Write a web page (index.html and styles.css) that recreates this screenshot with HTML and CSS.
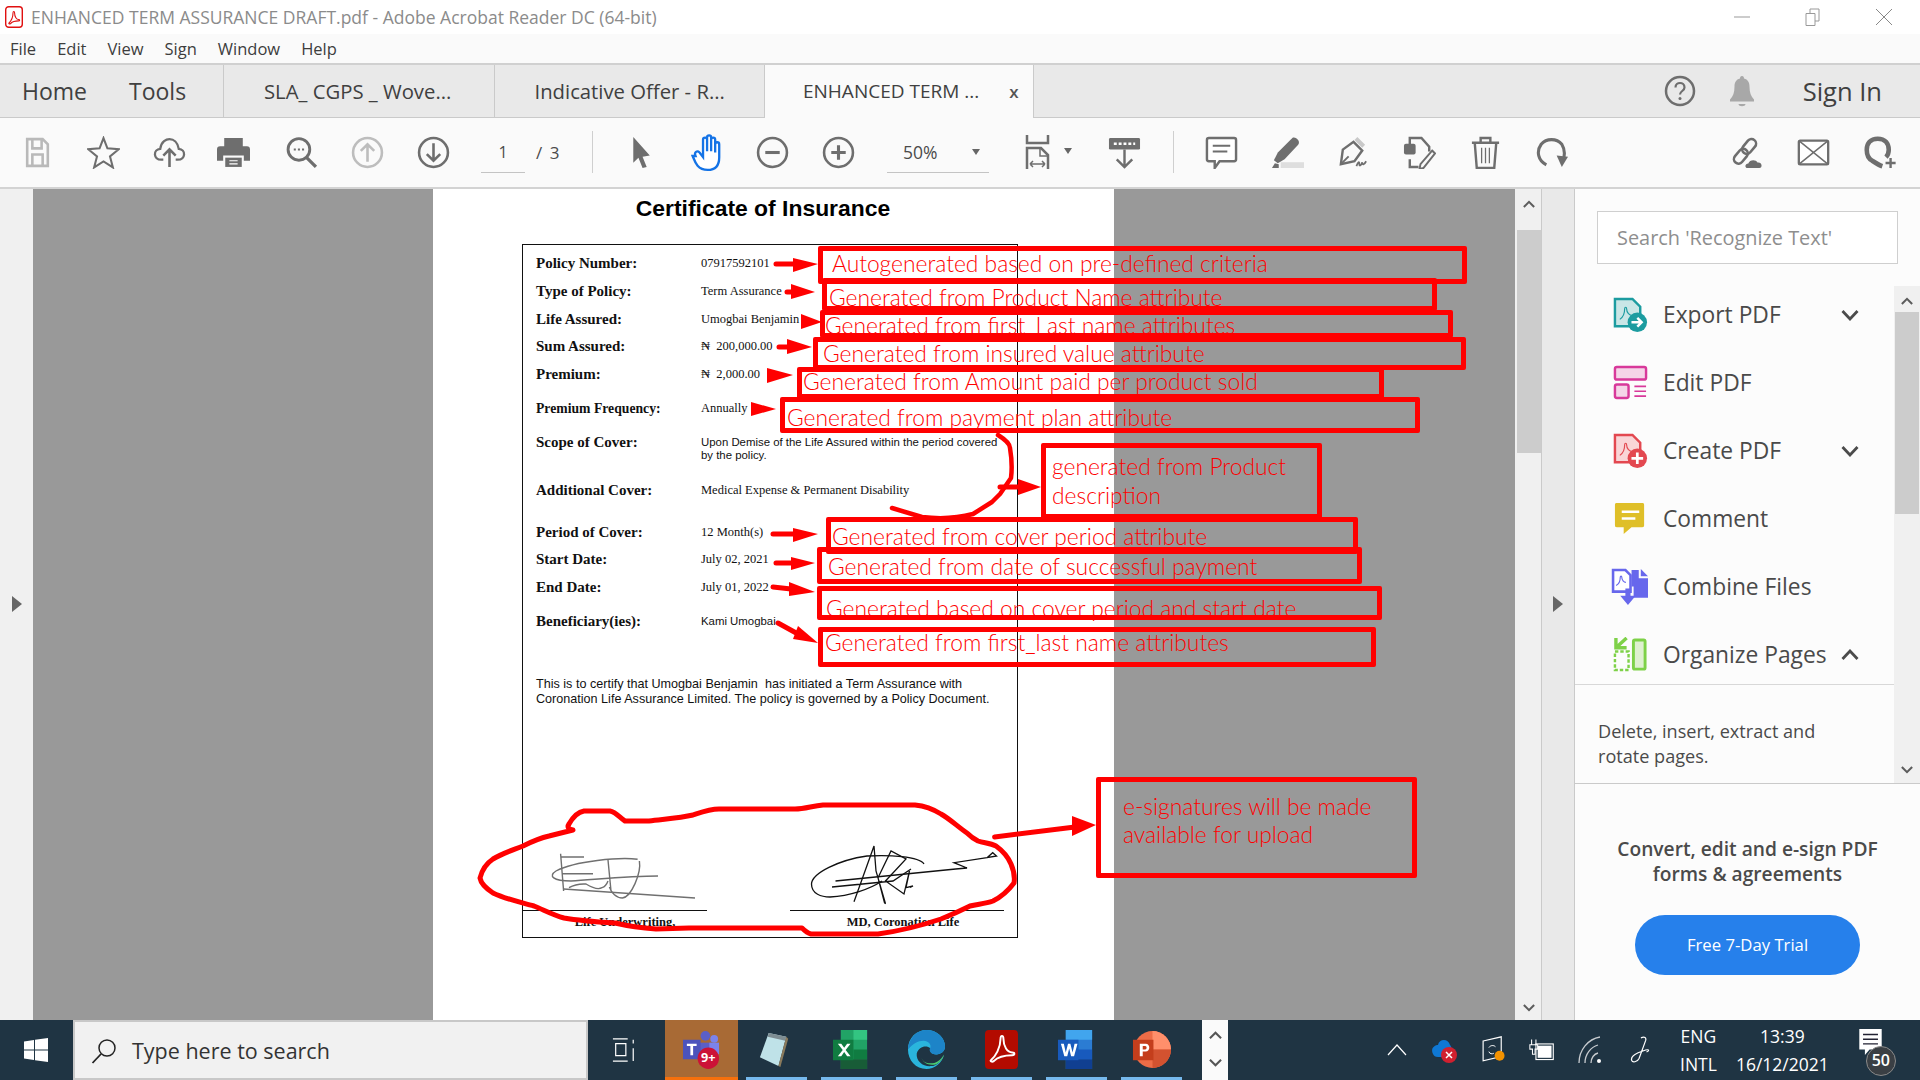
FILE: index.html
```html
<!DOCTYPE html>
<html lang="en">
<head>
  <meta charset="UTF-8">
  <title>ENHANCED TERM ASSURANCE DRAFT.pdf - Adobe Acrobat Reader DC (64-bit)</title>
  <link rel="stylesheet" href="styles.css">
</head>
<body>

  <header class="titlebar">
    <svg class="app-icon" viewBox="0 0 18 22"><rect x="0.7" y="0.7" width="16.6" height="20.6" rx="3" fill="#fff" stroke="#e01010" stroke-width="1.4"/><path d="M4 17c2-2 4-6 4-10 0-2 1.600-2 1.600 0 0 4 2 6.500 4 6.500 1.400 0 1.400 1.400 0 1.400-2.500 0-6 .6-8 2.600-1.200 1-2.200-.2-1.600-.5z" fill="none" stroke="#e01010" stroke-width="1.100"/></svg>
    <span class="title-text">ENHANCED TERM ASSURANCE DRAFT.pdf - Adobe Acrobat Reader DC (64-bit)</span>
    <div class="window-btns">
      <svg viewBox="0 0 20 20"><path d="M2 10h16" stroke="#999" stroke-width="1"/></svg>
      <svg viewBox="0 0 20 20"><path d="M3 6.500h9v12H3zM7 6.500V2h9v12h-4" fill="none" stroke="#999" stroke-width="1"/></svg>
      <svg viewBox="0 0 20 20"><path d="M2 2l16 16M18 2L2 18" stroke="#888" stroke-width="1"/></svg>
    </div>
  </header>

  <nav class="menubar">
    <span>File</span><span>Edit</span><span>View</span><span>Sign</span><span>Window</span><span>Help</span>
  </nav>

  <div class="tabbar">
    <div class="tab-main"><span>Home</span><span>Tools</span></div>
    <div class="tab">SLA_ CGPS _ Wove...</div>
    <div class="tab">Indicative Offer - R...</div>
    <div class="tab active">ENHANCED TERM ... <span class="tab-close">x</span></div>
    <div class="tab-rest">
      <svg class="help-icon" viewBox="0 0 32 32"><circle cx="16" cy="16" r="14" fill="none" stroke="#6e6e6e" stroke-width="2.500"/><path d="M11.500 12.500c0-6 9-6 9 0 0 3.500-4.500 3.500-4.500 7" fill="none" stroke="#6e6e6e" stroke-width="2.200"/><circle cx="16" cy="23.500" r="1.500" fill="#6e6e6e"/></svg>
      <svg class="bell-icon" viewBox="0 0 26 32"><path d="M13 1c1.500 0 2 1 2 2.500 4 1 5.500 4 5.500 8 0 6 1.500 10 4.500 13v2H1v-2c3-3 4.500-7 4.500-13 0-4 1.500-7 5.500-8C11 2 11.500 1 13 1zM9.500 29h7c0 3-7 3-7 0z" fill="#a8a8a8"/></svg>
      <span class="sign-in">Sign In</span>
    </div>
  </div>

  <div class="toolbar">
    <div class="tool"><svg viewBox="0 0 32 32"><path d="M6 3h15l5 5v21H6zM11 3v9h9V3M11 29V18h10v11" fill="none" stroke="#b9b9b9" stroke-width="2.500"/></svg></div>
    <div class="tool"><svg viewBox="0 0 32 32"><path d="M16 2l3.800 10 11 .8-8.500 7 2.800 10.700L16 24.700l-9.100 5.800 2.800-10.700-8.500-7 11-.8z" fill="none" stroke="#6e6e6e" stroke-width="2"/></svg></div>
    <div class="tool"><svg viewBox="0 0 32 32"><path d="M10 23H8c-8 0-8-10-1-10.500C8 5 13 3 16 3c4 0 8 3 9 9.500 7 .5 7 10.500-1 10.500h-2" fill="none" stroke="#6e6e6e" stroke-width="2.200"/><path d="M16 30V13M10 19l6-6 6 6" fill="none" stroke="#6e6e6e" stroke-width="2.500"/></svg></div>
    <div class="tool print-cell"><svg viewBox="0 0 32 32"><path d="M7 2h18v8H7zM3 10h26c2 0 3 1 3 3v11h-6v-5H6v5H0V13c0-2 1-3 3-3z" fill="#6e6e6e"/><path d="M8 21h16v9H8z" fill="#6e6e6e"/><path d="M12 24h8M12 27h8" stroke="#fff" stroke-width="1.200"/></svg></div>
    <div class="tool"><svg viewBox="0 0 32 32"><circle cx="13.500" cy="13" r="10.500" fill="none" stroke="#6e6e6e" stroke-width="2.800"/><path d="M21 21l9 9" stroke="#6e6e6e" stroke-width="3.200"/><path d="M8.500 13h2M12.500 13h2M16.500 13h2" stroke="#6e6e6e" stroke-width="2"/></svg></div>
    <div class="tool"><svg viewBox="0 0 32 32"><circle cx="16" cy="16" r="14" fill="none" stroke="#bdbdbd" stroke-width="2.500"/><path d="M16 25V8M9.500 14.500L16 8l6.500 6.500" fill="none" stroke="#bdbdbd" stroke-width="2.500"/></svg></div>
    <div class="tool"><svg viewBox="0 0 32 32"><circle cx="16" cy="16" r="14" fill="none" stroke="#6e6e6e" stroke-width="2.500"/><path d="M16 7v17M9.500 17.500L16 24l6.500-6.500" fill="none" stroke="#6e6e6e" stroke-width="2.500"/></svg></div>
    <div class="page-nav"><span class="page-num">1</span><span class="page-total">/ 3</span></div>
    <div class="tool-sep"></div>
    <div class="tool cursor-cell"><svg viewBox="0 0 32 32"><path d="M9 1l16 18-7 1 4 10-4 1-4-10-5 5z" fill="#6e6e6e"/></svg></div>
    <div class="tool hand-cell"><svg viewBox="0 0 32 32"><path d="M4 19c2 5 4 12 13 12 8 0 10-5 10-11V9c0-2.500-3.500-2.500-3.500 0v7-11c0-2.500-3.500-2.500-3.500 0v10V3c0-2.500-3.500-2.500-3.500 0v12V5c0-2.500-3.500-2.500-3.500 0v15l-3-4c-2-2-5-.5-3.500 3z" fill="#fff" stroke="#1473e6" stroke-width="2"/></svg></div>
    <div class="tool"><svg viewBox="0 0 32 32"><circle cx="16" cy="16" r="14" fill="none" stroke="#6e6e6e" stroke-width="2.500"/><path d="M9 16h14" stroke="#6e6e6e" stroke-width="3"/></svg></div>
    <div class="tool"><svg viewBox="0 0 32 32"><circle cx="16" cy="16" r="14" fill="none" stroke="#6e6e6e" stroke-width="2.500"/><path d="M9 16h14M16 9v14" stroke="#6e6e6e" stroke-width="3"/></svg></div>
    <div class="zoom-box"><span>50%</span><i class="caret"></i></div>
    <div class="tool fit-cell"><svg viewBox="0 0 32 36"><path d="M4 1v8h21V1" fill="none" stroke="#6e6e6e" stroke-width="2.500"/><path d="M4 35V14h14l7 7v14" fill="none" stroke="#6e6e6e" stroke-width="2.500"/><path d="M17 14v8h8" fill="none" stroke="#6e6e6e" stroke-width="1.500"/><path d="M7 30h15M7 30l3-3M7 30l3 3M22 30l-3-3M22 30l-3 3" fill="none" stroke="#6e6e6e" stroke-width="1.500"/></svg><i class="caret"></i></div>
    <div class="tool read-cell"><svg viewBox="0 0 34 34"><rect x="1" y="2" width="32" height="12" rx="1.500" fill="#6e6e6e"/><path d="M6 8h3M11 8h3M16 8h3M21 8h3M26 8h2" stroke="#fff" stroke-width="2.500"/><path d="M17 14v18M9 24l8 8 8-8" fill="none" stroke="#6e6e6e" stroke-width="2.500"/></svg></div>
    <div class="tool-sep sep-two"></div>
    <div class="tool"><svg viewBox="0 0 32 34"><path d="M3 2h26c1 0 2 1 2 2v20c0 1-1 2-2 2H14l-5 7v-7H3c-1 0-2-1-2-2V4c0-1 1-2 2-2z" fill="#fff" stroke="#6e6e6e" stroke-width="2.500"/><path d="M7 10h18M7 16h15" stroke="#6e6e6e" stroke-width="2"/></svg></div>
    <div class="tool"><svg viewBox="0 0 34 34"><path d="M3 25l4-8L22 2c3-2 9 3 6 7L14 24l-7 4z" fill="#6e6e6e"/><path d="M1 33l3-5 4 1v4z" fill="#6e6e6e"/><path d="M10 27h24v6H10z" fill="#dedede"/></svg></div>
    <div class="tool"><svg viewBox="0 0 34 34"><path d="M4 29L6 14 17 6l9 9-8 11z" fill="none" stroke="#6e6e6e" stroke-width="2.500"/><path d="M18 4l3-3 8 8-3 3z" fill="#c9c9c9"/><path d="M4 29l8-8" stroke="#6e6e6e" stroke-width="2"/><path d="M20 31c2-5 3-5 3-2s2 1 3-2c0 3 2 3 4-1" fill="none" stroke="#6e6e6e" stroke-width="1.800"/></svg></div>
    <div class="tool"><svg viewBox="0 0 34 34"><path d="M7 9V2h12l8 9v5" fill="none" stroke="#6e6e6e" stroke-width="2.500"/><rect x="1" y="8" width="12" height="11" rx="2" fill="#6e6e6e"/><path d="M7 24v8h9" fill="none" stroke="#6e6e6e" stroke-width="2.500"/><path d="M30 15l3 3-12 15-4 1 1-5z" fill="none" stroke="#6e6e6e" stroke-width="2"/></svg></div>
    <div class="tool"><svg viewBox="0 0 32 34"><path d="M2 7h28M11 7V2h10v5" fill="none" stroke="#6e6e6e" stroke-width="2.500"/><path d="M5 8l2 25h18l2-25" fill="none" stroke="#6e6e6e" stroke-width="2.500"/><path d="M12 12v16M16 12v16M20 12v16" stroke="#6e6e6e" stroke-width="1.300"/></svg></div>
    <div class="tool"><svg viewBox="0 0 32 32"><path d="M11 28C3 24 1 15 6 8c5-6 15-6 20 0 3 5 3 11 1 16" fill="none" stroke="#6e6e6e" stroke-width="3"/><path d="M21 19l11 1-6 10z" fill="#6e6e6e"/></svg></div>
    <div class="tool-right">
      <div class="tool"><svg viewBox="0 0 36 36"><g transform="rotate(-50 17 16)" fill="none" stroke="#6e6e6e" stroke-width="2.800"><rect x="0" y="11" width="18" height="10" rx="5"/><rect x="14" y="11" width="18" height="10" rx="5"/></g><path d="M19 35c-3 0-3-5 1-5 1-4 8-5 10-1 5-1 6 6 2 6z" fill="#6e6e6e"/></svg></div>
      <div class="tool"><svg viewBox="0 0 36 32"><rect x="2" y="3" width="32" height="26" rx="1.500" fill="#fff" stroke="#6e6e6e" stroke-width="2.500"/><path d="M2 3l32 26M34 3L2 29" stroke="#6e6e6e" stroke-width="1.600"/></svg></div>
      <div class="tool"><svg viewBox="0 0 36 36"><path d="M15 3c8 0 12 5 12 12 0 3-1 6-3 8M15 3C7 3 3 8 3 15c0 6 2 10 6 12 3 2 8 5 11 6" fill="none" stroke="#6e6e6e" stroke-width="5"/><path d="M29 24v11M23.500 29.500h11" stroke="#6e6e6e" stroke-width="2.600"/></svg></div>
    </div>
  </div>

  <main class="workspace">
    <div class="side-left"><svg class="side-arrow" viewBox="0 0 10 16"><path d="M0 0l10 8-10 8z" fill="#666"/></svg></div>

    <section class="viewer">
      <article class="page">
        <h1 class="page-title">Certificate of Insurance</h1>
        <div class="certificate">
          <dl class="fields">
            <dt>Policy Number:</dt><dd>07917592101</dd>
            <dt>Type of Policy:</dt><dd>Term Assurance</dd>
            <dt>Life Assured:</dt><dd>Umogbai Benjamin</dd>
            <dt>Sum Assured:</dt><dd>₦&nbsp; 200,000.00</dd>
            <dt>Premium:</dt><dd>₦&nbsp; 2,000.00</dd>
            <dt class="small-label">Premium Frequency:</dt><dd>Annually</dd>
            <dt class="scope-label">Scope of Cover:</dt><dd class="sans-value">Upon Demise of the Life Assured within the period covered<br>by the policy.</dd>
            <dt>Additional Cover:</dt><dd>Medical Expense &amp; Permanent Disability</dd>
            <dt>Period of Cover:</dt><dd>12 Month(s)</dd>
            <dt>Start Date:</dt><dd>July 02, 2021</dd>
            <dt>End Date:</dt><dd>July 01, 2022</dd>
            <dt>Beneficiary(ies):</dt><dd class="sans-value">Kami Umogbai</dd>
          </dl>
          <p class="statement">This is to certify that Umogbai Benjamin &nbsp;has initiated a Term Assurance with<br>Coronation Life Assurance Limited. The policy is governed by a Policy Document.</p>
          <div class="signers">
            <div class="signer signer-left">Life Underwriting,</div>
            <div class="signer signer-right">MD, Coronation Life</div>
          </div>
        </div>
      </article>
    </section>

    <div class="v-scroll">
      <svg class="chev" viewBox="0 0 14 10"><path d="M1 8.500l6-6 6 6" fill="none" stroke="#5c5c5c" stroke-width="2.400"/></svg>
      <div class="v-thumb"></div>
      <svg class="chev chev-bottom" viewBox="0 0 14 10"><path d="M1 1.500l6 6 6-6" fill="none" stroke="#5c5c5c" stroke-width="2.400"/></svg>
    </div>
    <div class="side-right"><svg class="side-arrow" viewBox="0 0 10 16"><path d="M0 0l10 8-10 8z" fill="#666"/></svg></div>

    <aside class="panel">
      <div class="panel-search"><div class="search-input">Search 'Recognize Text'</div></div>
      <div class="panel-scroll-wrap">
        <div class="panel-body">
          <ul class="tools-list">
            <li>
              <svg viewBox="0 0 36 36"><path d="M2 2h18l8 8v20H2z" fill="#c9e6e6" stroke="#1c9ca0" stroke-width="2.500"/><path d="M7 23c3-2 5-6 5-11 0-2 2-2 2 0 0 4 3 7 6 7" fill="none" stroke="#1c9ca0" stroke-width="1.200"/><circle cx="25" cy="26" r="10" fill="#1c9ca0"/><path d="M19 26h10M25 21.500l4.500 4.500-4.500 4.500" fill="none" stroke="#fff" stroke-width="2.500"/></svg>
              <span>Export PDF</span>
              <svg class="row-chev" viewBox="0 0 18 12"><path d="M1.500 2l7.500 8 7.500-8" fill="none" stroke="#4b4b4b" stroke-width="2.800"/></svg>
            </li>
            <li>
              <svg viewBox="0 0 36 36"><rect x="2" y="2" width="32" height="13" rx="2" fill="#f5d5e8" stroke="#d8399a" stroke-width="2.500"/><rect x="2" y="20" width="14" height="14" rx="2" fill="#f5d5e8" stroke="#d8399a" stroke-width="2.500"/><path d="M22 22h12M22 27h12M22 32h12" stroke="#d8399a" stroke-width="1.600"/></svg>
              <span>Edit PDF</span>
            </li>
            <li>
              <svg viewBox="0 0 36 36"><path d="M2 2h18l8 8v20H2z" fill="#f9d5d7" stroke="#e34850" stroke-width="2.500"/><path d="M7 23c3-2 5-6 5-11 0-2 2-2 2 0 0 4 3 7 6 7" fill="none" stroke="#e34850" stroke-width="1.200"/><circle cx="25" cy="26" r="10" fill="#e34850"/><path d="M19 26h12M25 20v12" stroke="#fff" stroke-width="2.800"/></svg>
              <span>Create PDF</span>
              <svg class="row-chev" viewBox="0 0 18 12"><path d="M1.500 2l7.500 8 7.500-8" fill="none" stroke="#4b4b4b" stroke-width="2.800"/></svg>
            </li>
            <li>
              <svg viewBox="0 0 36 36"><path d="M4 2h26c1.500 0 2 .5 2 2v21c0 1.500-.5 2-2 2H19l-8 7v-7H4c-1.500 0-2-.5-2-2V4c0-1.500.5-2 2-2z" fill="#dfbf28"/><path d="M9 11h18M9 18h14" stroke="#fff" stroke-width="2.500"/></svg>
              <span>Comment</span>
            </li>
            <li>
              <svg class="combine-icon" viewBox="0 0 36 36"><path d="M2 2h12l5 5v16H2z" fill="#fff" stroke="#6767ec" stroke-width="2.500"/><path d="M5 17c2-1 4-4 4-8 0-1.500 1.500-1.500 1.500 0 0 3 2 5 4 5" fill="none" stroke="#6767ec" stroke-width="1.100"/><path d="M20 2h7v8h9v19H22V18h-2z" fill="#6767ec"/><path d="M29 1l7 7h-7z" fill="#6767ec"/><path d="M14 20h5v7h5l-7.500 9L9 27h5z" fill="#6767ec"/></svg>
              <span>Combine Files</span>
            </li>
            <li>
              <svg viewBox="0 0 36 36"><rect x="21" y="3" width="12" height="30" rx="1.500" fill="#dff0d0" stroke="#7ed148" stroke-width="3"/><path d="M2 15h14v19H2z" fill="none" stroke="#7ed148" stroke-width="2.500" stroke-dasharray="3.500 2"/><path d="M3 1v10h11M3 11L14 1" fill="none" stroke="#7ed148" stroke-width="3.500"/></svg>
              <span>Organize Pages</span>
              <svg class="row-chev" viewBox="0 0 18 12"><path d="M1.500 10L9 2l7.500 8" fill="none" stroke="#4b4b4b" stroke-width="2.800"/></svg>
            </li>
          </ul>
          <p class="tool-desc">Delete, insert, extract and<br>rotate pages.</p>
        </div>
        <div class="panel-scrollbar">
          <svg class="chev" viewBox="0 0 14 10"><path d="M1 8.500l6-6 6 6" fill="none" stroke="#5c5c5c" stroke-width="2.400"/></svg>
          <div class="panel-thumb"></div>
          <svg class="chev chev-bottom" viewBox="0 0 14 10"><path d="M1 1.500l6 6 6-6" fill="none" stroke="#5c5c5c" stroke-width="2.400"/></svg>
        </div>
      </div>
      <div class="promo">
        <p class="promo-text">Convert, edit and e-sign PDF<br>forms &amp; agreements</p>
        <button class="trial-btn">Free 7-Day Trial</button>
      </div>
    </aside>

    <!-- signatures and the hand-drawn red marks -->
    <svg class="markup" viewBox="0 188 1515 832" width="1515" height="832">
      <g fill="none" stroke="#707070" stroke-width="1.400">
        <path d="M560.600 852.700L563.600 890M560.600 856H584M561.700 872.700H593"/>
        <path d="M637.600 858.300C620 856 575 860 556 870c-8 5-3 10 15 10 30-2 60-5 87-5"/>
        <path d="M608 859l3 31M639.400 860c2 12-8 36-17 37-6 0-11-5-13-11"/>
        <path d="M563.600 888L695 897M569 886.700c5-3 12-4 17-3.700 5 3 12 6 16 3.700 3-1 5-4 6-6.700"/>
      </g>
      <g fill="none" stroke="#111" stroke-width="1.300">
        <path d="M924 863c-5-8-35-9-57-8-28 4-55 17-55.500 28 0 10 10 13 18.500 13 20-1 40-8 52-16"/>
        <path d="M835.500 880L955.700 868 967 867 954 861.700l33-5 9.500-1.700-3.800-3.300-5.700 5"/>
        <path d="M832 886l61-6 18-12M854 900.700L874 845l2 25 9.500 32.700-1-1-6.500-25 13-26.700 15 8-20.500 22 18.500 13 5.500-23-3.500 16.700 7-1.700-3 1.500"/>
      </g>
      <path class="ink" d="M573 829C568 828 567 826 569 823 573 816 578 811 584 810H610C616 811 620 817 625 820H649C665 818 680 817 693 814 702 811 710 808 719 808H795C805 808 812 805 823 804H915C925 805 933 808 941 813 950 818 958 826 967 832 971 836 974 838 978 840 984 842 990 842 996 845 1003 850 1008 856 1011 863 1014 870 1015 876 1014 882 1008 890 1001 896 993 900 985 903 977 903 970 905 960 910 951 914 941 918 920 925 900 930 878 933H811C807 932 804 929 802 927H689L656 928C642 927 628 925 615 922 598 921 581 920 564 917 553 914 544 909 534 905 520 901 505 898 493 892 487 888 481 883 480 877 482 869 487 862 493 858 503 852 513 849 523 845 531 841 540 837 549 835z"/>
      <path class="ink thin" d="M998 434c8 5 12 10 12 13 2 12 2 22 1 30l-11 16-8 8-19 12c-15 4-35 5-51 3l-30-9"/>
      <path class="ink" d="M776 263H795M787 291h6M779 346h10M773 533h22M776 562h17M773 586l18 2M778 622l20 11M994.600 836L1075 826M1000 486h20"/>
      <g class="arrow-heads">
        <polygon points="793,257 818,263 793,271"/>
        <polygon points="791,283 815,291 791,298"/>
        <polygon points="801,313 822,321 801,328"/>
        <polygon points="787,338 812,346 787,353"/>
        <polygon points="767,367 793,374 767,382"/>
        <polygon points="751,401 776,408 751,415"/>
        <polygon points="793,527 818,533 793,541"/>
        <polygon points="791,556 815,562 791,569"/>
        <polygon points="789,581 815,591 789,595"/>
        <polygon points="798,625 818,642 793,638"/>
        <polygon points="1018,478 1041,486 1018,494"/>
        <polygon points="1072,815 1096,824 1072,835"/>
      </g>
    </svg>

    <div class="note note-1">Autogenerated based on pre-defined criteria</div>
    <div class="note note-2">Generated from Product Name attribute</div>
    <div class="note note-3">Generated from first_Last name attributes</div>
    <div class="note note-4">Generated from insured value attribute</div>
    <div class="note note-5">Generated from Amount paid per product sold</div>
    <div class="note note-6">Generated from payment plan attribute</div>
    <div class="note note-7">generated from Product<br>description</div>
    <div class="note note-8">Generated from cover period attribute</div>
    <div class="note note-9">Generated from date of successful payment</div>
    <div class="note note-10">Generated based on cover period and start date</div>
    <div class="note note-11">Generated from first_last name attributes</div>
    <div class="note note-12">e-signatures will be made<br>available for upload</div>
  </main>

  <footer class="taskbar">
    <div class="start"><svg viewBox="0 0 24 24"><path d="M0 3.500L10 2v9.500H0zM11 1.800L24 0v11.500H11zM0 12.500h10V22L0 20.500zM11 12.500h13V24l-13-1.800z" fill="#fff"/></svg></div>
    <div class="task-search">
      <svg viewBox="0 0 26 26"><circle cx="16" cy="10" r="8" fill="none" stroke="#222" stroke-width="1.500"/><path d="M10 16L1.500 25" stroke="#222" stroke-width="1.800"/></svg>
      <span>Type here to search</span>
    </div>
    <div class="task-view"><svg viewBox="0 0 26 26"><path d="M1 1h16M1 25h16M4 6h11v13H4zM23 2v4M23 11v14M1 3v0" fill="none" stroke="#fff" stroke-width="1.300"/></svg></div>
    <div class="task-app teams-app">
      <svg viewBox="0 0 40 40"><circle cx="24" cy="6" r="5" fill="#5b5fc7"/><circle cx="33" cy="9" r="4" fill="#7b83eb"/><path d="M16 13h15v17H16z" fill="#5b5fc7"/><path d="M28 13h10v12H28z" fill="#7b83eb"/><rect x="1" y="10" width="18" height="20" fill="#4b53bc"/><path d="M5 14h10v2.500h-3.600V26H8.600v-9.500H5z" fill="#fff"/><circle cx="27" cy="29" r="11" fill="#cc1237"/><text x="27" y="33" class="badge-text">9+</text></svg>
    </div>
    <div class="task-app running">
      <svg viewBox="0 0 40 40"><path d="M12 3l18 4-8 30L3 28z" fill="#bfe2e8"/><path d="M12 3l18 4-1 4-18-4z" fill="#7d8c92"/><path d="M30 7l2 2-8 29-2-1z" fill="#8a7a5c"/></svg>
    </div>
    <div class="task-app running">
      <svg viewBox="0 0 40 40"><path d="M9 0h27v40H9z" fill="#21a366"/><path d="M22 0h14v10H22z" fill="#33c481"/><path d="M22 20h14v10H22z" fill="#107c41"/><path d="M9 30h27v10H9z" fill="#185c37"/><rect x="1" y="10" width="21" height="21" fill="#107c41"/><path d="M6 14l5 6.500L6 27h3.500l3-4.500 3 4.500H19l-5-6.500L19 14h-3.500l-3 4.300-3-4.300z" fill="#fff"/></svg>
    </div>
    <div class="task-app running">
      <svg viewBox="0 0 40 40"><path d="M38 25c-2 9-10 15-18 15C9 40 1 31 1 20 1 8 10 0 20 0c11 0 19 8 19 17 0 5-4 8-9 8-4 0-7-2-6-6-4-4-12-2-14 5-1 8 7 14 15 13 5 0 10-5 13-12z" fill="#2ab5dd"/><path d="M20 0c11 0 19 8 19 17 0 5-4 8-9 8-6 0-8-4-6-7 1-3-2-7-7-7-6 0-11 3-16 9C2 8 10 0 20 0z" fill="#1d84c8"/><path d="M38 25c-4 7-10 10-16 9-3 0-6-2-7-5 2 5 8 8 15 6 4-2 7-6 8-10z" fill="#4ccf72"/></svg>
    </div>
    <div class="task-app running">
      <svg class="wide-icon" viewBox="0 0 34 40"><rect width="34" height="40" rx="4" fill="#b30b00"/><path d="M6 31c5-4 10-13 10-22 0-4 3-4 3 0 0 8 4 14 9 14 3 0 3 3 0 3-6 0-14 1-19 6-2 1.500-4-.3-3-1z" fill="none" stroke="#fff" stroke-width="2"/></svg>
    </div>
    <div class="task-app running">
      <svg viewBox="0 0 40 40"><path d="M9 0h27v40H9z" fill="#2b7cd3"/><path d="M9 0h27v10H9z" fill="#41a5ee"/><path d="M9 20h27v10H9z" fill="#185abd"/><path d="M9 30h27v10H9z" fill="#103f91"/><rect x="1" y="10" width="21" height="21" fill="#185abd"/><path d="M4 14h3l2 9 2.300-9h2.400l2.300 9 2-9h3l-3.500 13h-3l-2-8-2 8h-3z" fill="#fff"/></svg>
    </div>
    <div class="task-app running">
      <svg viewBox="0 0 40 40"><circle cx="21" cy="20" r="19" fill="#ed6c47"/><path d="M21 1a19 19 0 0 1 19 19H21z" fill="#ff8f6b"/><path d="M21 20h19a19 19 0 0 1-19 19z" fill="#d35230"/><rect x="1" y="10" width="21" height="21" fill="#c43e1c"/><path d="M8 14h6c5 0 5 8 0 8h-3v5H8zM11 16.500V20h2.500c2 0 2-3.500 0-3.500z" fill="#fff"/></svg>
    </div>
    <div class="task-scroll">
      <svg viewBox="0 0 14 10"><path d="M1 8.500l6-6 6 6" fill="none" stroke="#555" stroke-width="2.200"/></svg>
      <svg viewBox="0 0 14 10"><path d="M1 1.500l6 6 6-6" fill="none" stroke="#555" stroke-width="2.200"/></svg>
    </div>
    <div class="tray">
      <svg class="tray-caret" viewBox="0 0 20 12"><path d="M1 11l9-10 9 10" fill="none" stroke="#fff" stroke-width="1.200"/></svg>
      <svg class="tray-icon" viewBox="0 0 26 28"><path d="M2 18c-3-6 2-9 5-9 1-6 10-7 12 0 3 3 2 10-2 12H7c-3 0-4-1-5-3z" fill="#0f78d4"/><circle cx="18" cy="19" r="8" fill="#d0202f"/><path d="M15 16l6 6M21 16l-6 6" stroke="#fff" stroke-width="1.500"/></svg>
      <svg class="tray-icon" viewBox="0 0 28 34"><path d="M2 6l22-5v24L2 30z" fill="none" stroke="#fff" stroke-width="1.400"/><path d="M9 14c2-3 6-3 8-1M15 21c-2 1-5 1-6-2" fill="none" stroke="#fff" stroke-width="1.200"/><circle cx="22" cy="24" r="6" fill="#f39200"/></svg>
      <svg class="tray-icon" viewBox="0 0 30 26"><path d="M3 1v6M8 1v6M1 7h9v5H7v6H4v-6H1z" fill="none" stroke="#fff" stroke-width="1.200"/><rect x="8" y="6" width="20" height="18" fill="none" stroke="#fff" stroke-width="1.300"/><rect x="10" y="8" width="16" height="14" fill="#fff"/></svg>
      <svg class="tray-icon" viewBox="0 0 26 28"><path d="M1 27C1 14 10 3 22 1M7 27c0-9 6-16 13-18M13 27c0-5 3-9 7-10" fill="none" stroke="#c8ccd0" stroke-width="1.300"/><circle cx="21" cy="25" r="2" fill="#fff"/></svg>
      <svg class="tray-icon" viewBox="0 0 24 30"><path d="M13 2c4-2 6 0 5 3l-7 19c-2 4-7 5-8 2-1-4 3-6 7-8l8-3c4-1 4 1 1 2" fill="none" stroke="#fff" stroke-width="1.300"/></svg>
      <div class="lang"><span>ENG</span><span>INTL</span></div>
      <div class="clock"><span>13:39</span><span>16/12/2021</span></div>
      <div class="action-center">
        <svg viewBox="0 0 26 30"><path d="M1 1h24v22H12l-5 6v-6H1z" fill="#fff"/><path d="M5 7h16M5 12h16M5 17h16" stroke="#223" stroke-width="1.500"/></svg>
        <span class="count-badge">50</span>
      </div>
    </div>
  </footer>

</body>
</html>
```

FILE: styles.css
```css
* {
  box-sizing: border-box;
}
html, body {
  margin: 0;
  height: 100%;
}
body {
  width: 1920px;
  height: 1080px;
  overflow: hidden;
  display: flex;
  flex-direction: column;
  font-family: "Open Sans", "Noto Sans", sans-serif;
  color: #3f3f3f;
  background: #fafafa;
}

/* title + menu */
.titlebar {
  height: 34px;
  background: #fff;
  display: flex;
  align-items: center;
  padding-left: 5px;
}
.app-icon {
  width: 18px;
  height: 22px;
  margin-right: 8px;
}
.title-text {
  font-size: 17.500px;
  color: #8b8b8b;
  white-space: nowrap;
}
.window-btns {
  margin-left: auto;
  margin-right: 26px;
  display: flex;
  gap: 51px;
}
.window-btns svg {
  width: 20px;
  height: 20px;
}
.menubar {
  height: 31px;
  background: #fafafa;
  border-bottom: 2px solid #d0d0d0;
  display: flex;
  align-items: center;
  gap: 21px;
  padding: 1px 0 0 10px;
  font-size: 16.500px;
  color: #3d3d3d;
}

/* tabs */
.tabbar {
  height: 53px;
  display: flex;
  font-size: 20.300px;
  color: #404040;
}
.tabbar > div {
  background: #e9e9e9;
  border-bottom: 1px solid #cacaca;
  display: flex;
  align-items: center;
}
.tab-main {
  width: 223px;
  padding-left: 22px;
  gap: 42px;
  font-size: 23px;
}
.tab {
  width: 270.500px;
  border-left: 1px solid #cacaca;
  padding-left: 40px;
  white-space: nowrap;
}
.tabbar .tab.active {
  background: #fafafa;
  border-bottom: none;
  border-right: 1px solid #cacaca;
  padding-left: 38px;
  width: 270px;
  font-size: 19px;
}
.tab-close {
  margin-left: 30px;
  font-size: 17px;
  font-weight: 600;
  color: #555;
}
.tab-rest {
  flex: 1;
  justify-content: flex-end;
  padding-right: 38px;
}
.help-icon {
  width: 32px;
  height: 32px;
  margin-right: 33px;
}
.bell-icon {
  width: 26px;
  height: 32px;
  margin-right: 48px;
}
.sign-in {
  font-size: 25.500px;
}

/* toolbar */
.toolbar {
  height: 71px;
  background: #fafafa;
  border-bottom: 2px solid #d3d3d3;
  display: flex;
  align-items: center;
  padding-left: 4px;
  padding-right: 7px;
  flex-shrink: 0;
}
.tool {
  width: 66px;
  height: 40px;
  display: flex;
  align-items: center;
  justify-content: center;
  position: relative;
}
.tool svg {
  width: 33px;
  height: 33px;
}
.tool.print-cell svg {
  width: 35px;
  margin-left: -4px;
}
.tool.hand-cell svg {
  width: 37px;
  height: 37px;
}
.page-nav {
  width: 126px;
  display: flex;
  align-items: center;
  font-size: 16px;
  color: #4a4a4a;
  padding-left: 15px;
  height: 42px;
}
.page-num {
  width: 44px;
  text-align: center;
  border-bottom: 1px solid #c4c4c4;
  height: 42px;
  line-height: 42px;
}
.page-total {
  margin-left: 11px;
  font-size: 17px;
  word-spacing: 3px;
}
.tool-sep {
  width: 1px;
  height: 42px;
  background: #cfcfcf;
  margin-right: 14px;
}
.sep-two {
  margin-left: 16px;
}
.zoom-box {
  width: 102px;
  height: 42px;
  padding-left: 16px;
  margin: 0 17px 0 16px;
  position: relative;
  display: flex;
  align-items: center;
  font-size: 17.500px;
  border-bottom: 1px solid #c4c4c4;
  color: #4a4a4a;
}
.caret {
  position: absolute;
  top: 18px;
  width: 0;
  height: 0;
  border-left: 4.500px solid transparent;
  border-right: 4.500px solid transparent;
  border-top: 6px solid #666;
}
.zoom-box .caret {
  right: 9px;
}
.fit-cell .caret {
  right: 0;
  top: 16px;
}
.read-cell {
  margin-left: 19px;
}
.tool-right {
  margin-left: auto;
  display: flex;
  gap: 1px;
}
.tool.fit-cell svg {
  height: 36px;
  width: 32px;
}

/* main area */
.workspace {
  height: 832px;
  display: flex;
  position: relative;
  overflow: hidden;
}
.side-left {
  width: 33px;
  background: #f0f0f0;
  display: flex;
  align-items: center;
  padding-top: 0;
  justify-content: center;
}
.side-arrow {
  width: 10px;
  height: 16px;
}
.viewer {
  width: 1482px;
  background: #999;
  padding-left: 400px;
}
.page {
  width: 681px;
  height: 100%;
  background: #fff;
  padding-top: 6px;
  overflow: hidden;
}
.page-title {
  margin: 0 0 0 165px;
  width: 330px;
  text-align: center;
  font-family: "Liberation Sans", Arial, sans-serif;
  font-size: 22.900px;
  line-height: 26px;
  font-weight: 700;
  color: #000;
}
.certificate {
  margin: 23px 0 0 89px;
  width: 496px;
  height: 694px;
  border: 1.500px solid #111;
  display: flex;
  flex-direction: column;
  color: #111;
}
.fields {
  margin: 5px 0 0;
  padding-left: 13px;
  display: grid;
  grid-template-columns: 165px 1fr;
  grid-template-rows: 28px 28px 27px 28px 27px 42px 39px 44px 40px 14px 42px 26px;
  align-items: center;
  font-family: "Liberation Serif", serif;
}
.fields dt {
  font-size: 15px;
  font-weight: 700;
}
.fields dt.small-label {
  font-size: 13.700px;
}
.fields dt.scope-label {
  align-self: start;
  margin-top: 4px;
}
.fields dd {
  margin: 0;
  font-size: 12.500px;
  white-space: nowrap;
}
.fields dd.sans-value {
  font-family: "Liberation Sans", sans-serif;
  font-size: 11.400px;
  line-height: 13px;
}
.statement {
  margin: 42px 0 0 13px;
  font-family: "Liberation Sans", sans-serif;
  font-size: 12.600px;
  line-height: 15px;
  white-space: nowrap;
}
.signers {
  margin-top: auto;
  height: 27px;
  display: flex;
  font-family: "Liberation Serif", serif;
  font-size: 12.500px;
  font-weight: 700;
  line-height: 23px;
  text-align: center;
}
.signer {
  border-top: 1px solid #111;
}
.signer-left {
  width: 184px;
  margin-right: 83px;
  padding-left: 20px;
}
.signer-right {
  width: 214px;
  padding-left: 12px;
}

/* viewer scrollbar + right nav */
.v-scroll {
  width: 27px;
  background: #f0f0f0;
  border-right: 1px solid #cacaca;
  display: flex;
  flex-direction: column;
  align-items: center;
  padding-top: 10px;
  padding-left: 1px;
}
.chev {
  width: 12px;
  height: 10px;
  flex-shrink: 0;
}
.v-thumb {
  width: 24px;
  height: 223px;
  background: #ccc;
  margin-top: 21px;
}
.chev-bottom {
  margin-top: auto;
  margin-bottom: 7px;
}
.side-right {
  width: 33px;
  background: #e9e9e9;
  border-right: 1px solid #cacaca;
  display: flex;
  align-items: center;
  justify-content: center;
}

/* right panel */
.panel {
  width: 345px;
  background: #fcfcfc;
  display: flex;
  flex-direction: column;
}
.panel-search {
  height: 92px;
  padding: 22px 22px 0;
}
.search-input {
  width: 301px;
  height: 53px;
  background: #fff;
  border: 1px solid #cfcfcf;
  padding-left: 19px;
  line-height: 51px;
  font-size: 19.900px;
  color: #8e8e8e;
  white-space: nowrap;
}
.panel-scroll-wrap {
  height: 503px;
  display: flex;
  border-bottom: 1px solid #cacaca;
}
.panel-body {
  width: 319px;
}
.tools-list {
  list-style: none;
  margin: 0;
  padding: 0 0 0 38px;
  height: 404px;
  border-bottom: 1px solid #d8d8d8;
  margin-left: 0;
}
.tools-list li {
  height: 68px;
  display: flex;
  align-items: center;
  font-size: 22.800px;
  color: #4a4a4a;
  position: relative;
}
.tools-list li > svg:first-child {
  width: 35px;
  height: 35px;
  margin-right: 15px;
}
.tools-list li > svg.combine-icon {
  margin-left: -2px;
  width: 37px;
  height: 37px;
}
.row-chev {
  position: absolute;
  left: 228px;
  top: 28px;
  width: 18px;
  height: 12px;
}
.tool-desc {
  margin: 34px 0 0 23px;
  font-size: 18.100px;
  line-height: 25.500px;
  color: #4a4a4a;
}
.panel-scrollbar {
  width: 26px;
  background: #f0f0f0;
  display: flex;
  flex-direction: column;
  align-items: center;
  margin-top: 5px;
  padding-top: 10px;
}
.panel-thumb {
  width: 24px;
  height: 202px;
  background: #ccc;
  margin-top: 6px;
}
.panel-scrollbar .chev-bottom {
  margin-bottom: 8px;
}
.promo {
  flex: 1;
  text-align: center;
  padding-top: 52px;
  padding-left: 0;
}
.promo-text {
  margin: 0;
  font-size: 19.200px;
  line-height: 25px;
  font-weight: 600;
  color: #4a4a4a;
}
.trial-btn {
  display: block;
  margin: 29px 0 0 60px;
  width: 225px;
  height: 60px;
  border: none;
  border-radius: 30px;
  background: #2680eb;
  color: #fff;
  font-family: inherit;
  font-size: 16.700px;
}

/* red annotations drawn over the document */
.markup {
  position: absolute;
  left: 0;
  top: 0;
}
.ink {
  fill: none;
  stroke: #f00;
  stroke-width: 5px;
  stroke-linejoin: round;
  stroke-linecap: round;
}
.ink.thin {
  stroke-width: 4.500px;
}
.arrow-heads polygon {
  fill: #f00;
}
.note {
  position: absolute;
  border: 5px solid #f00;
  border-radius: 2px;
  color: #f00;
  font-family: Lato, "Open Sans", sans-serif;
  font-size: 22.800px;
  font-weight: 300;
  line-height: 18px;
  white-space: nowrap;
}
.note-1 { left: 818px; top: 57px; width: 649px; height: 38px; padding: 3px 0 0 9px; }
.note-2 { left: 822px; top: 89px; width: 615px; height: 33px; padding: 5px 0 0 2px; }
.note-3 { left: 820px; top: 121px; width: 633px; height: 28px; padding: 1px 0 0 0; }
.note-4 { left: 813px; top: 148px; width: 653px; height: 33px; padding: 2px 0 0 5px; }
.note-5 { left: 797px; top: 178px; width: 587px; height: 32px; padding: 0 0 0 1px; }
.note-6 { left: 780px; top: 208px; width: 640px; height: 36px; padding: 6px 0 0 2px; }
.note-7 { left: 1041px; top: 254px; width: 281px; height: 76px; padding: 4px 0 0 6px; line-height: 29.500px; }
.note-8 { left: 826px; top: 328px; width: 532px; height: 37px; padding: 5px 0 0 1px; }
.note-9 { left: 817px; top: 358px; width: 545px; height: 37px; padding: 5px 0 0 6px; }
.note-10 { left: 817px; top: 397px; width: 565px; height: 34px; padding: 8px 0 0 4px; }
.note-11 { left: 818px; top: 438px; width: 558px; height: 40px; padding: 1px 0 0 2px; }
.note-12 { left: 1096px; top: 588px; width: 321px; height: 101px; padding: 10px 0 0 22px; line-height: 28.500px; }

/* taskbar */
.taskbar {
  height: 60px;
  flex-shrink: 0;
  background: #1f3443;
  display: flex;
  color: #fff;
}
.start {
  width: 73px;
  display: flex;
  align-items: center;
  padding-left: 24px;
}
.start svg {
  width: 24px;
  height: 24px;
}
.task-search {
  width: 515px;
  background: #f1f1f1;
  border: 2px solid #c8c8c8;
  border-bottom-width: 2px;
  display: flex;
  align-items: center;
  padding: 1px 0 0 16px;
  color: #333;
  font-size: 21.500px;
}
.task-search svg {
  width: 26px;
  height: 26px;
  margin-right: 15px;
}
.task-view {
  width: 77px;
  display: flex;
  align-items: center;
  padding-left: 24px;
}
.task-view svg {
  width: 24px;
  height: 24px;
}
.task-app {
  width: 75px;
  display: flex;
  align-items: center;
  justify-content: center;
  border-bottom: 3px solid transparent;
  position: relative;
}
.task-app svg {
  width: 39px;
  height: 39px;
  margin-top: 2px;
}
.task-app svg.wide-icon {
  width: 33px;
}
.teams-app {
  width: 73px;
  background: #a86a35;
  border-bottom-color: #f7700c;
  margin-right: 1px;
}
.badge-text {
  font-family: "Open Sans", sans-serif;
  font-size: 13px;
  font-weight: 700;
  fill: #fff;
  text-anchor: middle;
}
.running::after {
  content: "";
  position: absolute;
  left: 7px;
  right: 7px;
  bottom: -3px;
  height: 3px;
  background: #76b9ed;
}
.task-scroll {
  width: 26px;
  margin-left: 13px;
  background: #fafafa;
  display: flex;
  flex-direction: column;
  align-items: center;
  justify-content: space-between;
  padding: 10px 0 12px;
}
.task-scroll svg {
  width: 13px;
  height: 10px;
}
.tray {
  flex: 1;
  display: flex;
  align-items: center;
  font-size: 17.500px;
  padding-left: 159px;
}
.tray-caret {
  width: 20px;
  height: 12px;
  margin-right: 24px;
}
.tray-icon {
  width: 26px;
  height: 28px;
  margin-right: 23px;
}
.lang, .clock {
  display: flex;
  flex-direction: column;
  gap: 7px;
  text-align: center;
  line-height: 21px;
}
.lang {
  margin-left: 4px;
}
.clock {
  margin-left: 18px;
  width: 95px;
}
.action-center {
  position: relative;
  margin-left: 28px;
  width: 26px;
  height: 44px;
}
.action-center svg {
  width: 25px;
  height: 28px;
}
.count-badge {
  position: absolute;
  left: 8px;
  top: 18px;
  width: 30px;
  height: 30px;
  border-radius: 50%;
  background: #3a3f44;
  border: 1px solid #8a8a8a;
  font-size: 16px;
  font-weight: 600;
  line-height: 27px;
  text-align: center;
}
```
